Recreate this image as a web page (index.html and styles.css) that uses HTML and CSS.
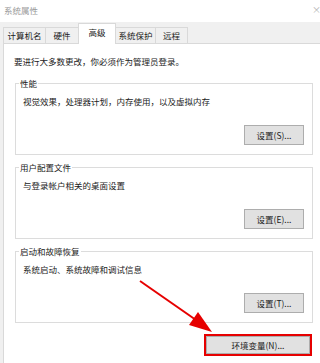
FILE: index.html
```html
<!DOCTYPE html>
<html lang="zh-CN">
<head>
    <meta charset="UTF-8">
    <meta name="viewport" content="width=device-width, initial-scale=1.0">
    <title>系统属性</title>
    <link rel="stylesheet" href="styles.css">
</head>
<body>
    <div class="titlebar">
        <span class="title">系统属性</span>
        <span class="close">×</span>
    </div>

    <div class="tabs">
        <div class="tab tab-name">计算机名</div>
        <div class="tab tab-hw">硬件</div>
        <div class="tab tab-adv active">高级</div>
        <div class="tab tab-prot">系统保护</div>
        <div class="tab tab-remote">远程</div>
    </div>

    <div class="panel">
        <div class="intro">要进行大多数更改，你必须作为管理员登录。</div>

        <fieldset class="group">
            <legend>性能</legend>
            <div class="group-text">视觉效果，处理器计划，内存使用，以及虚拟内存</div>
            <button class="btn">设置(S)...</button>
        </fieldset>

        <fieldset class="group">
            <legend>用户配置文件</legend>
            <div class="group-text">与登录帐户相关的桌面设置</div>
            <button class="btn">设置(E)...</button>
        </fieldset>

        <fieldset class="group">
            <legend>启动和故障恢复</legend>
            <div class="group-text">系统启动、系统故障和调试信息</div>
            <button class="btn">设置(T)...</button>
        </fieldset>

        <div class="env-row">
            <button class="btn btn-env">环境变量(N)...</button>
        </div>
    </div>

    <svg class="arrow" width="320" height="363" viewBox="0 0 320 363">
        <line x1="140" y1="281" x2="196" y2="320" stroke="#e60000" stroke-width="2"/>
        <polygon points="212,332 189,325 198,312" fill="#e60000"/>
    </svg>
</body>
</html>
```

FILE: styles.css
```css
body {
    margin: 0;
    width: 320px;
    height: 363px;
    overflow: hidden;
    background-color: #f0f0f0;
    font-family: "Noto Sans CJK SC", "Noto Sans", sans-serif;
    font-size: 8.5px;
    line-height: 12px;
    color: #1a1a1a;
}

.titlebar {
    height: 22px;
    background-color: #fff;
    display: flex;
    justify-content: space-between;
    align-items: center;
    padding-left: 4px;
    padding-bottom: 2px;
    box-sizing: border-box;
}

.title {
    color: #9a9a9a;
}

.close {
    color: #b0b0b0;
    font-size: 9px;
    margin-right: -1px;
}

.tabs {
    height: 21px;
    display: flex;
    align-items: flex-end;
    padding-left: 3px;
}

.tab {
    height: 16px;
    box-sizing: border-box;
    border: 1px solid #d9d9d9;
    border-bottom: none;
    margin-right: -1px;
    display: flex;
    justify-content: center;
    align-items: center;
    padding-bottom: 1px;
}

.tab-name { width: 43px; }
.tab-hw { width: 34px; }
.tab-adv { width: 38px; }
.tab-prot { width: 41px; }
.tab-remote { width: 33px; }

.tab.active {
    height: 21px;
    background-color: #fff;
    margin-bottom: -1px;
    position: relative;
    z-index: 1;
    padding-bottom: 5px;
}

.panel {
    margin-left: 3px;
    width: 321px;
    height: 330px;
    box-sizing: border-box;
    background-color: #fff;
    border: 1px solid #d9d9d9;
    padding: 11px 0 0 10px;
}

.intro {
    margin-bottom: 10px;
}

.group {
    margin: 0 0 6px 1px;
    width: 298px;
    box-sizing: border-box;
    border: 1px solid #dcdcdc;
    padding: 6px 8px 9px 7px;
}

.group legend {
    margin-left: -4px;
    padding: 0 1px;
    line-height: 12px;
}

.btn {
    display: block;
    margin: 18px 0 0 auto;
    width: 60px;
    height: 20px;
    padding: 0;
    background-color: #e1e1e1;
    border: 1px solid #adadad;
    font-family: inherit;
    font-size: 8.5px;
    color: #1a1a1a;
}

.env-row {
    margin: 13px 0 0 1px;
    width: 298px;
    display: flex;
    justify-content: flex-end;
    padding-right: 3px;
    box-sizing: border-box;
}

.btn-env {
    margin: 0;
    width: 104px;
    height: 18px;
    outline: 2px solid #e60000;
}

.arrow {
    position: absolute;
    left: 0;
    top: 0;
    pointer-events: none;
}
```
